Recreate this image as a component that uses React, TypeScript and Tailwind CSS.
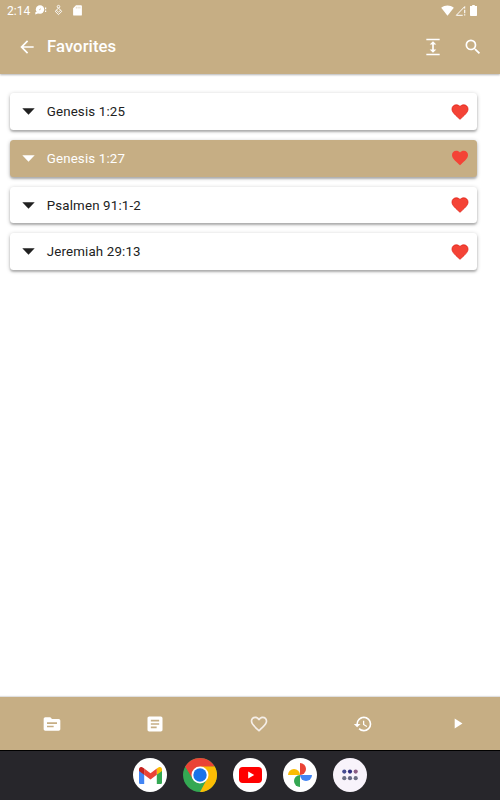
import { useState } from "react";
import {
  MdArrowBack,
  MdArticle,
  MdExpand,
  MdFavoriteBorder,
  MdHistory,
  MdPlayArrow,
  MdSearch,
  MdSource,
} from "react-icons/md";

const verses = ["Genesis 1:25", "Genesis 1:27", "Psalmen 91:1-2", "Jeremiah 29:13"];

const StatusBar = () => (
  <div className="h-5 flex items-center justify-between pl-[7px] pr-[23px]">
    <div className="flex items-center">
      <span className="w-7 pt-px text-[12px] leading-5 whitespace-nowrap">2:14</span>
      <svg className="w-3 h-3" viewBox="0 0 12 12" fill="currentColor">
        <circle cx="5" cy="5.5" r="4.2" />
        <path d="M.3 8.2l2.5-.6.7 1.6L.3 10.4zM10 3.6h1.2v1.6H10zM10 6.4h1.2V8H10z" />
        <path d="M4 6l2-1.3" stroke="#c6ae84" strokeWidth="0.7" />
      </svg>
      <svg className="ml-[7px] w-[9px] h-3" viewBox="0 0 9 12" fill="none" stroke="currentColor" strokeWidth="0.9">
        <circle cx="4.5" cy="2.7" r="1.3" />
        <path d="M4.5 4.2L7.8 7.3 4.5 10.6 1.2 7.3z" />
        <path d="M2.2 6l2.3 2.2L6.8 6" />
      </svg>
      <svg className="ml-[10px] w-[9px] h-[11px]" viewBox="0 0 9 11" fill="currentColor">
        <path d="M3 .3h5a.9.9 0 0 1 .9.9v8.5a.9.9 0 0 1-.9.9H1a.9.9 0 0 1-.9-.9V3.3z" />
        <path d="M3.3 1.8v1.7M5.1 1.8v1.7M6.9 1.8v1.7" stroke="#c6ae84" strokeWidth="0.5" />
      </svg>
    </div>
    <div className="flex items-center">
      <svg className="w-[13px] h-[11px]" viewBox="0 0 13 11" fill="currentColor">
        <path d="M6.5 10.8L.2 2.8C4-.2 9-.2 12.8 2.8z" />
      </svg>
      <svg className="ml-px w-[11px] h-[11px]" viewBox="0 0 11 11" fill="none" stroke="currentColor">
        <path d="M7.7 10.3H1.3L9.7 1.6v2" />
        <path d="M9.7 4.8v3.5M9.7 9.3v1.3" strokeWidth="1.1" />
      </svg>
      <svg className="ml-[4px] w-[7px] h-[11px]" viewBox="0 0 7 11" fill="currentColor">
        <path d="M2.2 0h2.6v1H7v9.3a.7.7 0 0 1-.7.7H.7a.7.7 0 0 1-.7-.7V1h2.2z" />
      </svg>
    </div>
  </div>
);

const VerseCard = ({ title, selected, onClick }: { title: string; selected: boolean; onClick: () => void }) => (
  <button
    onClick={onClick}
    className={`h-[36.7px] w-full flex items-center pl-[12px] pr-[7px] rounded-[3.5px] text-left shadow-[0_1px_4px_rgba(0,0,0,0.24),0_2px_2px_rgba(0,0,0,0.2)] ${
      selected ? "bg-[#c6ae84] text-white" : "bg-white text-[#212121]"
    }`}
  >
    <svg className="w-[13px] h-[7px] shrink-0" viewBox="0 0 13 7" fill="currentColor">
      <path d="M.3.3h12.4L6.5 6.7z" />
    </svg>
    <span className="ml-[11.7px] grow pt-px text-[13.3px] leading-5 tracking-[0.17px]">{title}</span>
    <svg
      className={`size-5 shrink-0 ${selected ? "stroke-none" : "stroke-[#e0190f]"}`}
      viewBox="0 0 24 24"
      fill="#f44336"
      strokeWidth="0.9"
    >
      <path d="M12 20.8l-1.4-1.3C5.6 15 2.4 12 2.4 8.5c0-2.9 2.2-5.1 5.1-5.1 1.7 0 3.4.8 4.5 2.1 1.1-1.3 2.8-2.1 4.5-2.1 2.9 0 5.1 2.2 5.1 5.1 0 3.5-3.2 6.5-8.2 11z" />
    </svg>
  </button>
);

const Dock = () => (
  <nav className="h-[50px] shrink-0 flex items-center justify-center gap-4 bg-[#27262b] shadow-[inset_0_1px_0_#000]">
    <div className="size-[34px] rounded-full bg-white flex items-center justify-center">
      <svg width="23" height="17" viewBox="0 0 23 17">
        <path d="M0 3v12.4c0 .9.7 1.6 1.6 1.6h3.6V7z" fill="#4285f4" />
        <path d="M17.8 7v10h3.6c.9 0 1.6-.7 1.6-1.6V3z" fill="#34a853" />
        <path d="M17.8 1.6v6.2L23 3.9V2.3c0-2-2.2-3-3.7-1.8z" fill="#fbbc04" />
        <path d="M5.2 7.8V1.6l6.3 4.7 6.3-4.7v6.2l-6.3 4.7z" fill="#ea4335" />
        <path d="M0 2.3v1.6l5.2 3.9V1.6L3.7.5C2.2-.7 0 .3 0 2.3z" fill="#c5221f" />
      </svg>
    </div>
    <svg className="size-[34px]" viewBox="0 0 34 34">
      <circle cx="17" cy="17" r="17" fill="#34a853" />
      <path d="M2.28 8.5A17 17 0 0 1 31.72 8.5L17 9.5 10 21z" fill="#ea4335" />
      <path d="M31.72 8.5A17 17 0 0 1 17 34L24 21 17 8.5z" fill="#fbbc04" />
      <path d="M2.28 8.5l8 13L17 17V8.5z" fill="#ea4335" />
      <circle cx="17" cy="17" r="8.5" fill="#fff" />
      <circle cx="17" cy="17" r="6.7" fill="#1a73e8" />
    </svg>
    <div className="size-[34px] rounded-full bg-white flex items-center justify-center">
      <svg width="23" height="16" viewBox="0 0 23 16">
        <rect width="23" height="16" rx="3.7" fill="#f00" />
        <path d="M9.2 4.6l6 3.4-6 3.4z" fill="#fff" />
      </svg>
    </div>
    <div className="size-[34px] rounded-full bg-white flex items-center justify-center">
      <svg width="24" height="24" viewBox="0 0 24 24">
        <path d="M12 0a6 6 0 0 1 0 12z" fill="#ea4335" />
        <path d="M24 12a6 6 0 0 1-12 0z" fill="#4285f4" />
        <path d="M12 24a6 6 0 0 1 0-12z" fill="#34a853" />
        <path d="M0 12a6 6 0 0 1 12 0z" fill="#fbbc04" />
      </svg>
    </div>
    <div className="size-[34px] rounded-full bg-[#f8f3fb] flex items-center justify-center">
      <svg width="16" height="12" viewBox="0 0 16 12">
        <circle cx="2.3" cy="2.6" r="2.1" fill="#454c91" />
        <circle cx="8" cy="2.6" r="2.1" fill="#303080" />
        <circle cx="13.7" cy="2.6" r="2.1" fill="#8b5d83" />
        <circle cx="2.3" cy="9.2" r="2.1" fill="#6b7084" />
        <circle cx="8" cy="9.2" r="2.1" fill="#656883" />
        <circle cx="13.7" cy="9.2" r="2.1" fill="#6b6d82" />
      </svg>
    </div>
  </nav>
);

export default function App() {
  const [selected, setSelected] = useState(1);

  return (
    <div className="w-[500px] h-[800px] flex flex-col overflow-hidden bg-white font-[Roboto,sans-serif]">
      {/* App bar */}
      <header className="h-[74px] shrink-0 bg-[#c6ae84] text-white shadow-[0_1px_2px_rgba(0,0,0,0.3)]">
        <StatusBar />
        <div className="h-[53px] flex items-center pl-[17px] pr-[17px]">
          <MdArrowBack className="size-5" />
          <h1 className="ml-[10px] grow text-[16.7px] leading-6 font-medium tracking-[0.06px]">Favorites</h1>
          <MdExpand className="size-5" />
          <MdSearch className="ml-5 size-5" />
        </div>
      </header>

      {/* Verses */}
      <main className="grow flex flex-col gap-[10px] pt-[19.3px] pl-[10px] pr-[23px]">
        {verses.map((title, i) => (
          <VerseCard key={title} title={title} selected={i === selected} onClick={() => setSelected(i)} />
        ))}
      </main>

      {/* Bottom navigation */}
      <footer className="h-[53px] shrink-0 flex items-center bg-[#c6ae84] text-white shadow-[0_-1px_1px_rgba(0,0,0,0.12)]">
        <div className="w-[103.6px] flex justify-center">
          <MdSource className="size-5" />
        </div>
        <div className="w-[103.6px] flex justify-center">
          <MdArticle className="size-5" />
        </div>
        <div className="w-[103.6px] flex justify-center">
          <MdFavoriteBorder className="size-5 text-[#f5eee7]" />
        </div>
        <div className="w-[103.6px] flex justify-center">
          <MdHistory className="size-5" />
        </div>
        <div className="grow flex justify-center">
          <MdPlayArrow className="size-[17px]" />
        </div>
      </footer>

      <Dock />
    </div>
  );
}
